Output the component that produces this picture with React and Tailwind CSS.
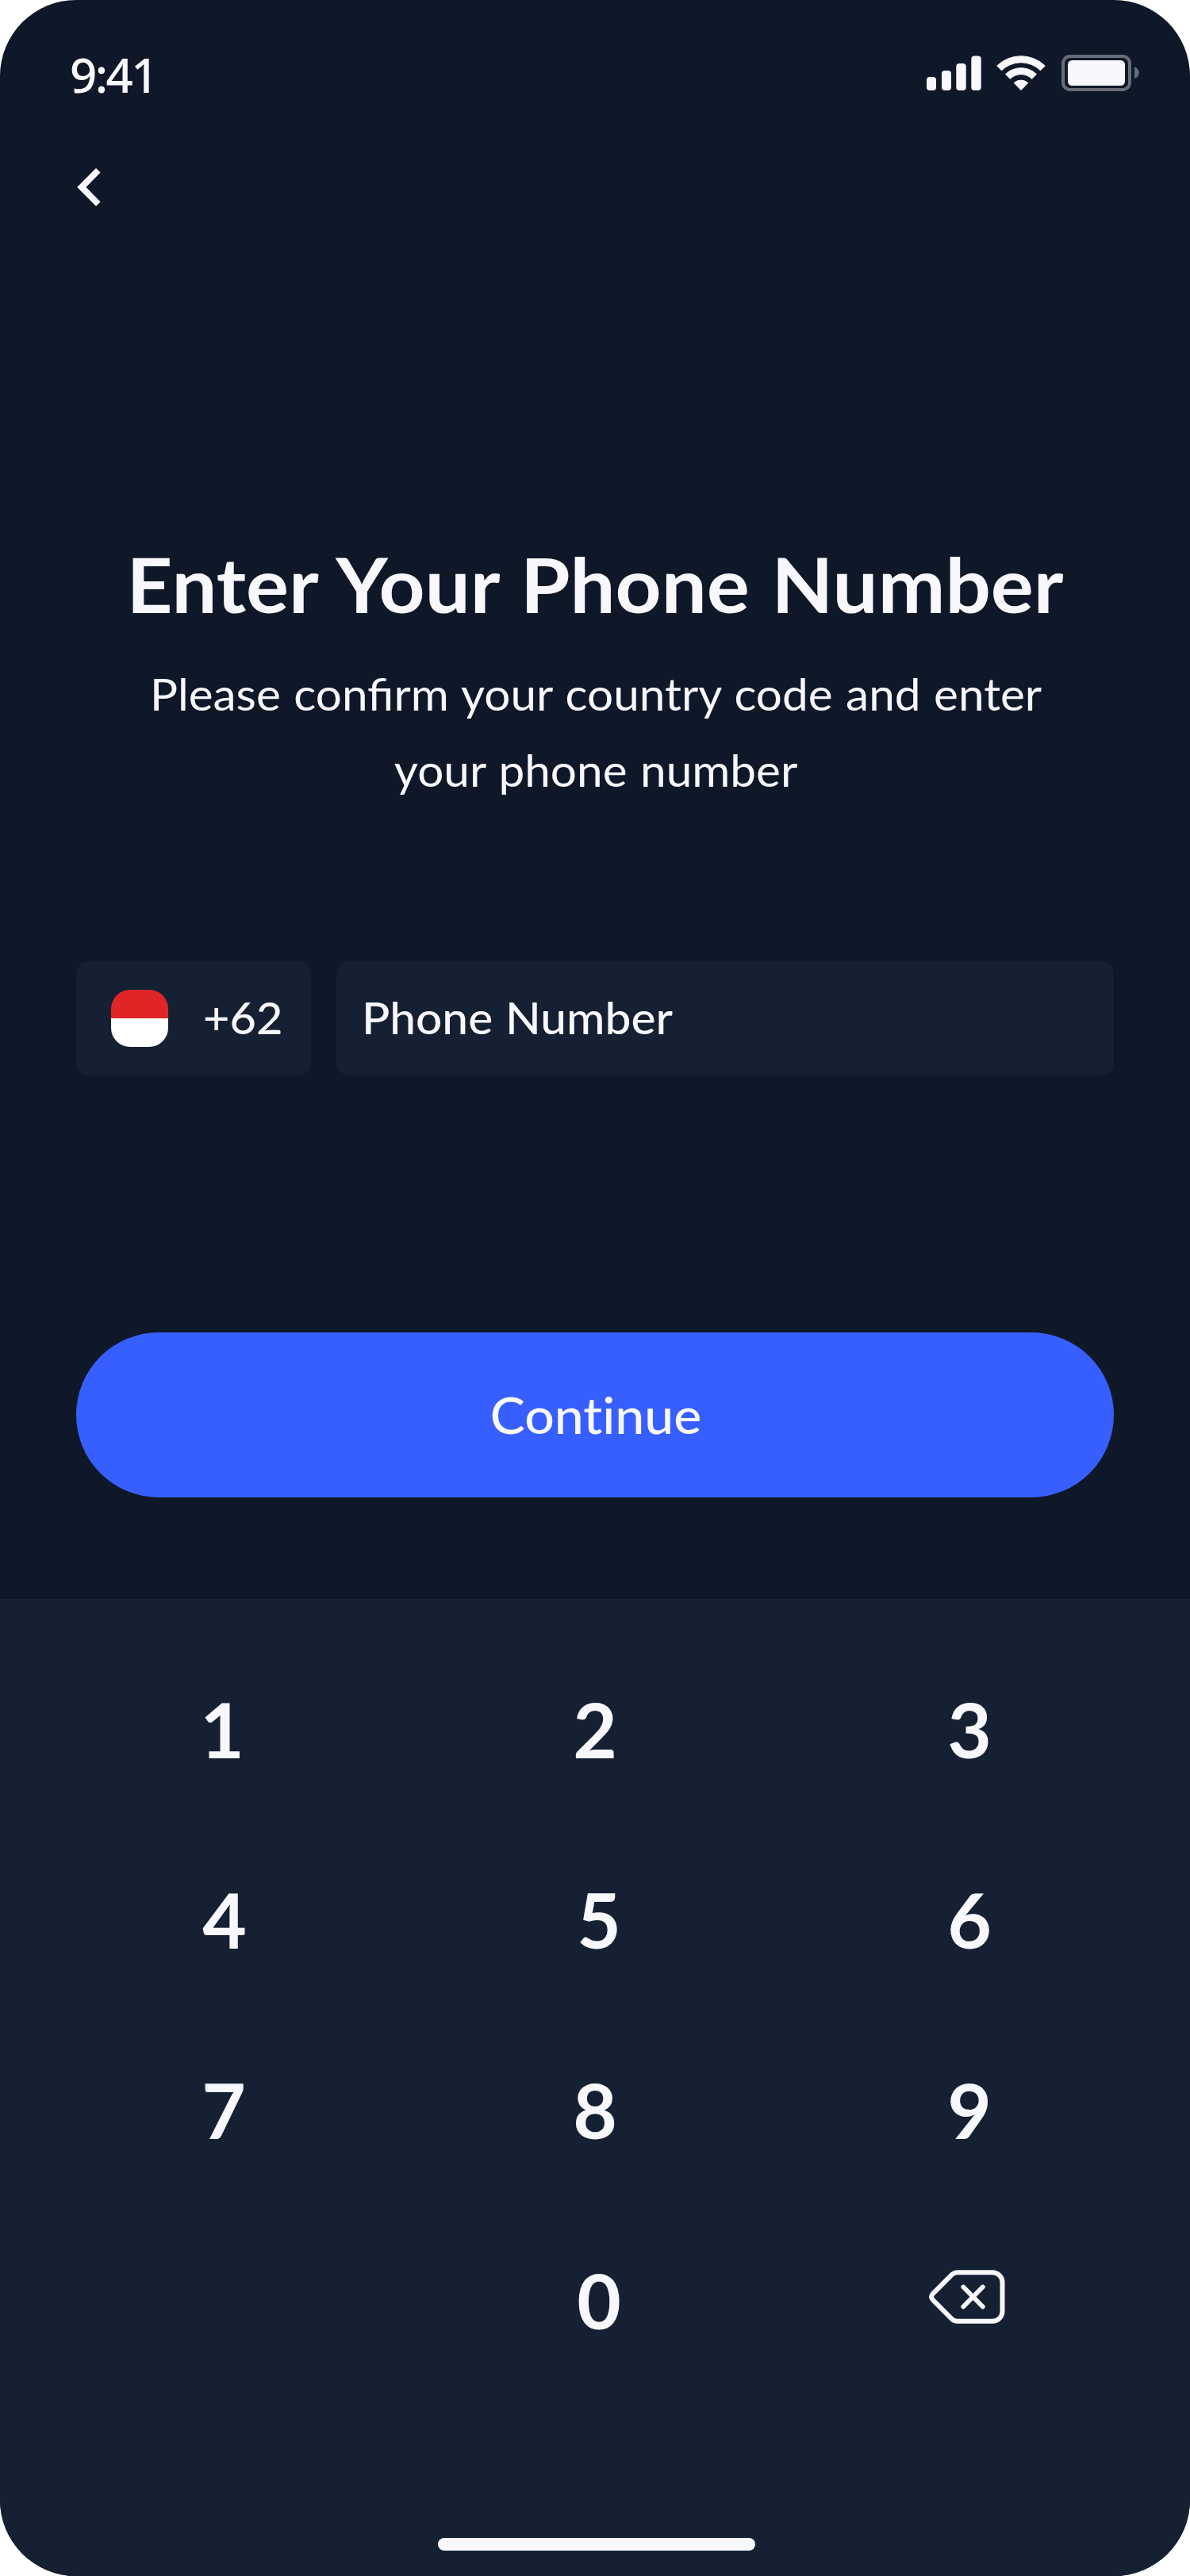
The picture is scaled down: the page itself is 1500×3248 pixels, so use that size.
import React from "react";

function SignalIcon() {
  return (
    <svg width="69" height="44" viewBox="0 0 69 44" fill="currentColor">
      <rect x="0" y="27" width="12" height="17" rx="4" />
      <rect x="19" y="19" width="12" height="25" rx="4" />
      <rect x="37.3" y="10" width="12.4" height="34" rx="4" />
      <rect x="56.3" y="0.4" width="12.4" height="43.6" rx="4" />
    </svg>
  );
}

function WifiIcon() {
  return (
    <svg
      width="62"
      height="45"
      viewBox="0 0 62 45"
      fill="currentColor"
      stroke="currentColor"
      strokeWidth="1"
      strokeLinejoin="round"
    >
      <path d="M0.7 13 A43.5 43.5 0 0 1 61.3 13 L55.5 18.8 A35 35 0 0 0 6.5 18.8 Z" />
      <path d="M11.5 23.5 A28.2 28.2 0 0 1 50.5 23.5 L44.8 29.4 A19.6 19.6 0 0 0 17.2 29.4 Z" />
      <path d="M22.2 34.6 A12.8 12.8 0 0 1 39.8 34.6 L31 43.6 Z" />
    </svg>
  );
}

function BatteryIcon() {
  return (
    <svg width="98" height="46" viewBox="0 0 98 46" fill="currentColor">
      <rect
        x="2"
        y="2"
        width="84"
        height="42"
        rx="8.7"
        fill="none"
        stroke="currentColor"
        strokeWidth="4"
        opacity="0.38"
      />
      <rect x="8" y="7" width="72" height="32" rx="5.5" />
      <path d="M92 15 C99.6 18.2 99.6 27.4 92 30.6 Z" opacity="0.38" />
    </svg>
  );
}

function BackIcon() {
  return (
    <svg width="30" height="48" viewBox="0 0 30 48" fill="currentColor">
      <path d="M0.2 24 L24 0.1 L29.6 5.6 L11.5 24 L29.6 42.4 L24 47.9 Z" />
    </svg>
  );
}

function BackspaceIcon() {
  return (
    <svg
      width="96"
      height="68"
      viewBox="30.5 32 96 68"
      fill="none"
      stroke="currentColor"
      strokeWidth="6"
      strokeLinecap="round"
      strokeLinejoin="round"
    >
      <path d="M66.3 35.3 H110.5 A12.5 12.5 0 0 1 123 47.8 V84.2 A12.5 12.5 0 0 1 110.5 96.7 H66.3 Q62.2 96.7 59.2 93.8 L35.6 70.2 Q31.6 66 35.6 61.8 L59.2 38.2 Q62.2 35.3 66.3 35.3 Z" />
      <path d="M73.7 53.5 L98.3 78.5 M98.3 53.5 L73.7 78.5" strokeWidth="5.8" />
    </svg>
  );
}

const keys = [
  { label: "1", nudge: "-ml-1" },
  { label: "2", nudge: "-ml-1" },
  { label: "3" },
  { label: "4", nudge: "ml-0.5" },
  { label: "5", nudge: "ml-1.5" },
  { label: "6" },
  { label: "7" },
  { label: "8", nudge: "-ml-1" },
  { label: "9" },
];

function Key({ label, nudge = "" }) {
  return (
    <button type="button" className="flex h-60 items-center justify-center">
      <span className={nudge}>{label}</span>
    </button>
  );
}

export default function App() {
  return (
    <div className="h-[3248px] w-[1500px] bg-white">
      <div className="flex h-full flex-col overflow-hidden rounded-[96px] bg-[#0F1828] font-['Lato',sans-serif] text-[#F7F7FC]">
        <header className="flex items-start justify-between pt-[61px] pr-16 pl-[88px]">
          <span className="font-['Noto_Sans',sans-serif] text-[60px] leading-[66px] font-medium tracking-[-2.6px]">
            9:41
          </span>
          <div className="flex h-16 items-start pt-2">
            <div className="mt-[1px]">
              <SignalIcon />
            </div>
            <div className="mt-[1px] ml-[19px]">
              <WifiIcon />
            </div>
            <div className="ml-5">
              <BatteryIcon />
            </div>
          </div>
        </header>

        <button type="button" aria-label="Back" className="mt-[85px] ml-[97px] self-start">
          <BackIcon />
        </button>

        <main className="flex flex-col px-24 pt-[416px]">
          <h1 className="scale-x-[1.054] text-center text-[96px] leading-[120px] font-bold whitespace-nowrap [word-spacing:3px]">
            Enter Your Phone Number
          </h1>
          <p className="mt-[31px] scale-x-[1.044] pl-0.5 text-center text-[56px] leading-[96px] [word-spacing:1.5px]">
            Please confirm your country code and enter
            <br />
            your phone number
          </p>

          <div className="mt-[193px] flex h-36 gap-8 text-[56px] font-medium">
            <div className="flex w-[296px] items-center rounded-2xl bg-[#152033] pl-11">
              <div className="flex size-[72px] flex-col overflow-hidden rounded-3xl">
                <div className="h-9 bg-[#DF2526]" />
                <div className="h-9 bg-white" />
              </div>
              <span className="ml-11 origin-left scale-x-[1.03] pb-0.5">+62</span>
            </div>
            <div className="flex flex-1 items-center rounded-2xl bg-[#152033] pb-0.5 pl-8">
              <span className="origin-left scale-x-[1.046] [word-spacing:1px]">Phone Number</span>
            </div>
          </div>

          <button
            type="button"
            className="mt-[324px] flex h-52 items-center justify-center rounded-full bg-[#375FFF] pl-0.5 text-[64px] font-medium"
          >
            <span className="scale-x-[1.033] [font-variant-ligatures:none]">Continue</span>
          </button>
        </main>

        <section className="mt-32 flex flex-1 flex-col bg-[#152033] pt-11">
          <div className="mx-[47px] grid w-[1410px] grid-cols-3 text-[96px] leading-none font-bold">
            {keys.map((key) => (
              <Key key={key.label} {...key} />
            ))}
            <span />
            <Key label="0" nudge="ml-1.5" />
            <button
              type="button"
              aria-label="Delete"
              className="flex h-60 items-center justify-center pr-[7px] pb-2"
            >
              <BackspaceIcon />
            </button>
          </div>
          <div className="mt-auto mb-8 ml-[552px] h-4 w-[400px] rounded-full bg-[#F7F7FC]" />
        </section>
      </div>
    </div>
  );
}
